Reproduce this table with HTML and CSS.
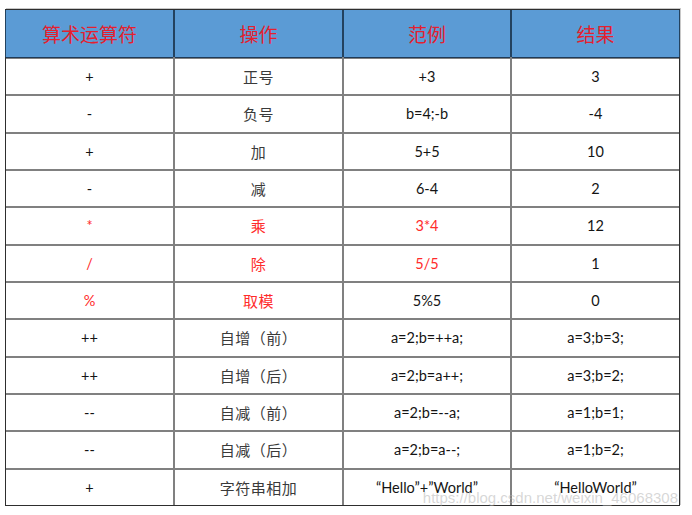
FILE: index.html
```html
<!DOCTYPE html>
<html lang="zh">
<head>
<meta charset="utf-8">
<title>算术运算符</title>
<link rel="stylesheet" href="styles.css">
</head>
<body>
<div class="sheet">
  <div class="grid">
    <div class="cell head">算术运算符</div>
    <div class="cell head">操作</div>
    <div class="cell head">范例</div>
    <div class="cell head">结果</div>

    <div class="cell lat">+</div><div class="cell cjk">正号</div><div class="cell lat">+3</div><div class="cell lat">3</div>
    <div class="cell lat">-</div><div class="cell cjk">负号</div><div class="cell lat">b=4;-b</div><div class="cell lat">-4</div>
    <div class="cell lat">+</div><div class="cell cjk">加</div><div class="cell lat">5+5</div><div class="cell lat">10</div>
    <div class="cell lat">-</div><div class="cell cjk">减</div><div class="cell lat">6-4</div><div class="cell lat">2</div>
    <div class="cell lat red">*</div><div class="cell cjk red">乘</div><div class="cell lat red">3*4</div><div class="cell lat">12</div>
    <div class="cell lat red">/</div><div class="cell cjk red">除</div><div class="cell lat red">5/5</div><div class="cell lat">1</div>
    <div class="cell lat red">%</div><div class="cell cjk red">取模</div><div class="cell lat">5%5</div><div class="cell lat">0</div>
    <div class="cell lat">++</div><div class="cell cjk">自增（前）</div><div class="cell lat">a=2;b=++a;</div><div class="cell lat">a=3;b=3;</div>
    <div class="cell lat">++</div><div class="cell cjk">自增（后）</div><div class="cell lat">a=2;b=a++;</div><div class="cell lat">a=3;b=2;</div>
    <div class="cell lat">--</div><div class="cell cjk">自减（前）</div><div class="cell lat">a=2;b=--a;</div><div class="cell lat">a=1;b=1;</div>
    <div class="cell lat">--</div><div class="cell cjk">自减（后）</div><div class="cell lat">a=2;b=a--;</div><div class="cell lat">a=1;b=2;</div>
    <div class="cell lat">+</div><div class="cell cjk">字符串相加</div><div class="cell lat">“Hello”+”World”</div><div class="cell lat">“HelloWorld”</div>
  </div>
  <div class="watermark">https://blog.csdn.net/weixin_46068308</div>
</div>
</body>
</html>
```
FILE: styles.css
```css
html, body {
  margin: 0;
  padding: 0;
  background: #ffffff;
}

.sheet {
  position: relative;
  width: 675px;
  margin: 9px 0 0 5px;
  box-shadow: 1px -1px 0 #c8c8c8;
}

.grid {
  display: grid;
  grid-template-columns: 167px 167px 166px 167px;
  grid-template-rows: 47px repeat(12, 1fr);
  column-gap: 2px;
  row-gap: 2px;
  height: 497px;
  box-sizing: border-box;
  border: 1px solid #2e2e2e;
  background: #808080;
}

.cell {
  background: #ffffff;
  display: flex;
  align-items: center;
  justify-content: center;
  white-space: nowrap;
}

.head {
  background: #5b9bd5;
  color: #e4202e;
  font-family: "Noto Sans CJK SC", sans-serif;
  font-size: 19px;
  font-weight: 400;
  box-shadow: 0 1px 0 #1f3a57, 1px 0 0 #23425f, -1px 0 0 #23425f;
}

.lat {
  font-family: Lato, "Open Sans", sans-serif;
  font-size: 14.5px;
  color: #141414;
}

.cjk {
  font-family: "Noto Sans CJK SC", sans-serif;
  font-size: 15px;
  font-weight: 400;
  color: #3a3a3a;
  letter-spacing: 0.5px;
}

.red {
  color: #ff2b2b;
}

.watermark {
  position: absolute;
  right: 2px;
  bottom: 0;
  font-family: "Liberation Sans", Arial, sans-serif;
  font-size: 15px;
  color: rgba(175, 175, 175, 0.5);
  pointer-events: none;
}
```
